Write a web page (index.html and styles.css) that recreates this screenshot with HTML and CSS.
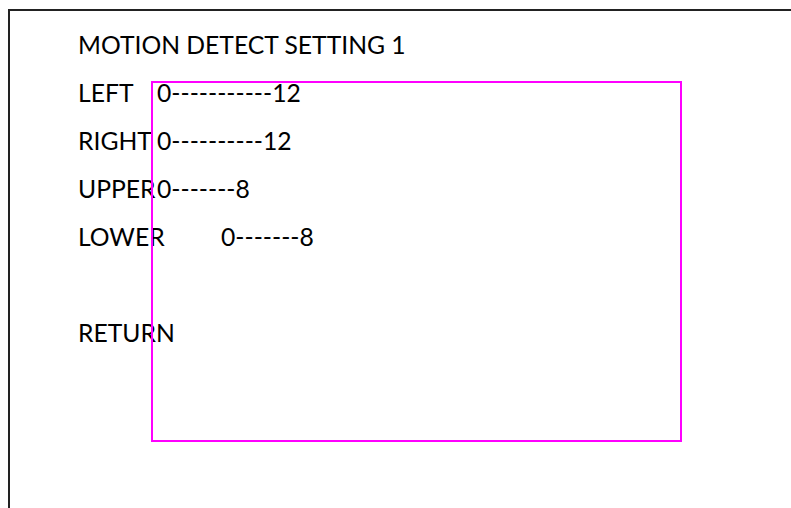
FILE: index.html
```html
<!DOCTYPE html>
<html lang="en">
<head>
    <meta charset="UTF-8">
    <meta name="viewport" content="width=device-width, initial-scale=1.0">
    <title>Motion Detect Setting</title>
    <link rel="stylesheet" href="styles.css">
</head>
<body>
    <div class="screen">
        <div class="menu">
            <div class="row title">MOTION DETECT SETTING 1</div>
            <div class="row"><span class="label">LEFT</span><span class="value">0-----------12</span></div>
            <div class="row"><span class="label">RIGHT</span><span class="value">0----------12</span></div>
            <div class="row"><span class="label">UPPER</span><span class="value">0-------8</span></div>
            <div class="row"><span class="label">LOWER</span><span class="value value-far">0-------8</span></div>
            <div class="row"></div>
            <div class="row"><span class="label">RETURN</span></div>
        </div>
        <!-- detection area overlay -->
        <div class="area"></div>
    </div>
</body>
</html>
```

FILE: styles.css
```css
html, body {
    margin: 0;
    height: 100%;
    overflow: hidden;
    background: #fff;
}
.screen {
    position: relative;
    margin: 9px 0 0 8px;
    height: calc(100% - 9px);
    border-top: 2px solid #222;
    border-left: 2px solid #222;
    box-sizing: border-box;
    padding: 10px 0 0 68px;
    font-family: Lato, "Liberation Sans", sans-serif;
    font-size: 24.7px;
    color: #000;
}
.row {
    display: flex;
    align-items: baseline;
    height: 48px;
    line-height: 48px;
    white-space: nowrap;
}
.label {
    width: 79px;
}
.value-far {
    margin-left: 64px;
}
.area {
    position: absolute;
    left: 141px;
    top: 70px;
    width: 531px;
    height: 361px;
    box-sizing: border-box;
    border: 2px solid #ff00ff;
}
```
